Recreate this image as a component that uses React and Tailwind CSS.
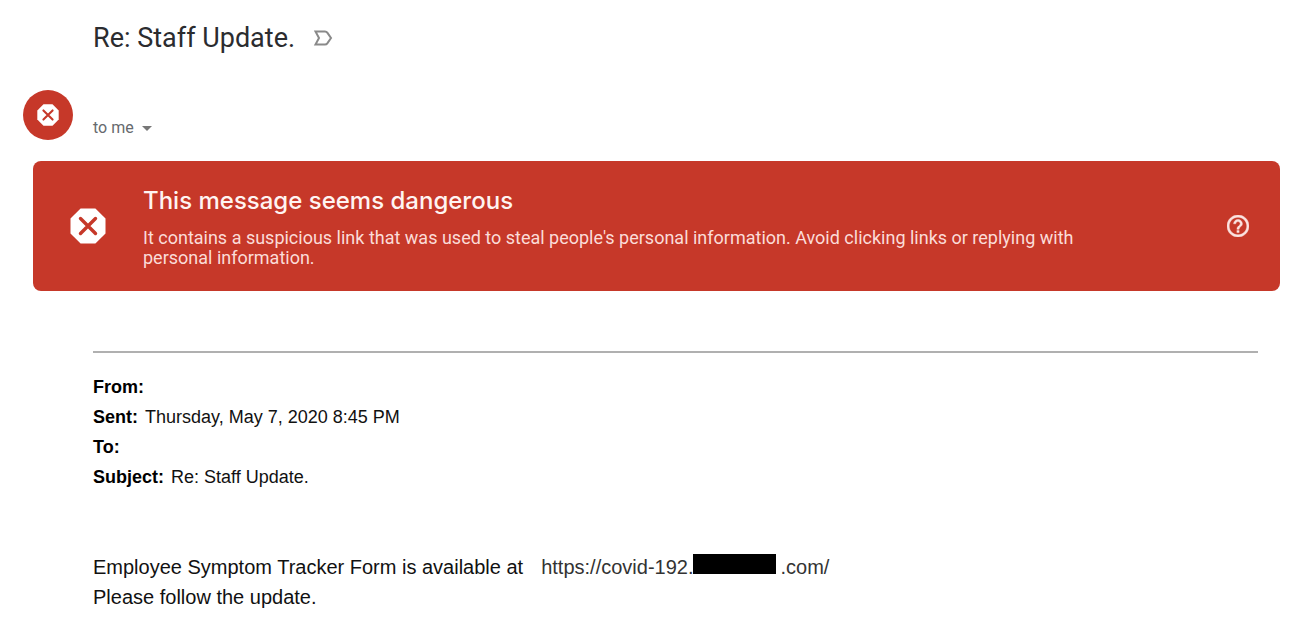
function DangerOctagon({ className }) {
  return (
    <svg viewBox="0 0 36 36" className={className} aria-hidden="true">
      <path d="M10.6 0.5h14.8L35.5 10.6v14.8L25.4 35.5H10.6L0.5 25.4V10.6z" fill="#fff" />
      <path d="M10.5 10.5l15 15M25.5 10.5l-15 15" stroke="#c63829" strokeWidth="3.4" strokeLinecap="round" />
    </svg>
  );
}

function ImportanceMarker() {
  return (
    <svg viewBox="0 0 20 18" className="h-[18px] w-5" fill="none" stroke="#8a8a8a" strokeWidth="2" aria-hidden="true">
      <path d="M2.500 2.500h9.500q1.500 0 2.300 1.100L18 9l-3.700 5.400q-.8 1.100-2.300 1.100H2.500L6 9z" />
    </svg>
  );
}

function HelpIcon() {
  return (
    <svg viewBox="2 2 20 20" className="size-[22px]" fill="#fbe3e0" stroke="#fbe3e0" strokeWidth="0.4" aria-hidden="true">
      <path d="M11 18h2v-2h-2v2zm1-16C6.480 2 2 6.480 2 12s4.480 10 10 10 10-4.480 10-10S17.520 2 12 2zm0 18c-4.410 0-8-3.590-8-8s3.590-8 8-8 8 3.590 8 8-3.590 8-8 8zm0-14c-2.210 0-4 1.790-4 4h2c0-1.100.9-2 2-2s2 .9 2 2c0 2-3 1.750-3 5h2c0-2.250 3-2.500 3-5 0-2.210-1.790-4-4-4z" />
    </svg>
  );
}

const details = [
  ["From:", ""],
  ["Sent:", "Thursday, May 7, 2020 8:45 PM"],
  ["To:", ""],
  ["Subject:", "Re: Staff Update."],
];

export default function App() {
  return (
    <main className="bg-white pt-5 pb-5 font-['Liberation_Sans',Arial,sans-serif] text-[#111]">
      <header className="flex items-center gap-[18px] pl-[93px]">
        <h1 className="font-[Roboto,sans-serif] text-[27px] leading-9 text-[#2b2c2f]">Re: Staff Update.</h1>
        <button type="button" aria-label="Mark as important">
          <ImportanceMarker />
        </button>
      </header>

      <div className="mt-[34px] flex gap-5 pl-[23px]">
        <div className="flex size-[50px] items-center justify-center rounded-full bg-[#c63829]">
          <DangerOctagon className="size-[22px]" />
        </div>
        <button
          type="button"
          className="flex items-center gap-2 self-end pb-[2px] font-[Roboto,sans-serif] text-base leading-5 text-[#666a6e]"
        >
          to me
          <svg viewBox="0 0 10 5" className="h-[5px] w-[10px]" fill="#777" aria-hidden="true">
            <path d="M0 0h10L5 5z" />
          </svg>
        </button>
      </div>

      <section
        role="alert"
        className="mr-5 ml-[33px] mt-[21px] flex items-center rounded-lg bg-[#c63829] py-[23px] pr-[31px] pl-[37px] font-[Roboto,sans-serif]"
      >
        <DangerOctagon className="size-9 shrink-0" />
        <div className="ml-[37px] min-w-0 flex-1">
          <h2 className="font-[Inter,sans-serif] text-2xl leading-[34px] font-medium text-[#fff4f2]">
            This message seems dangerous
          </h2>
          <p className="mt-[10px] max-w-[960px] text-lg leading-5 text-[#fbdcd8]">
            It contains a suspicious link that was used to steal people's personal information. Avoid clicking links or
            replying with personal information.
          </p>
        </div>
        <button type="button" aria-label="Help" className="ml-5 shrink-0">
          <HelpIcon />
        </button>
      </section>

      <article className="mt-[60px] mr-[42px] ml-[93px]">
        <hr className="border-t-2 border-[#b0b0b0]" />
        <dl className="mt-[19px] text-lg leading-[30px]">
          {details.map(([label, value]) => (
            <div key={label} className="flex gap-[7px]">
              <dt className="font-bold text-black">{label}</dt>
              <dd>{value}</dd>
            </div>
          ))}
        </dl>
        <div className="mt-[60px] text-xl leading-[30px]">
          <p className="flex flex-wrap items-center">
            <span className="mr-[18px]">Employee Symptom Tracker Form is available at</span>
            <a href="#form" className="flex items-center text-[#333]">
              https://covid-192.
              <span className="mr-1 mb-[6px] h-5 w-[83px] bg-black" />
              .com/
            </a>
          </p>
          <p>Please follow the update.</p>
        </div>
      </article>
    </main>
  );
}
